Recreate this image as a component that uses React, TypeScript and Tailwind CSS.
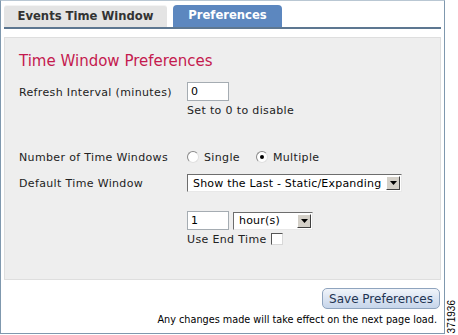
const font = { fontFamily: '"DejaVu Sans", Verdana, sans-serif' };

function Radio({ checked }: { checked?: boolean }) {
  return (
    <span className="relative inline-block w-[12px] h-[12px] rounded-full bg-white border border-t-[#8a8a8a] border-l-[#8a8a8a] border-b-[#e0e0e0] border-r-[#e0e0e0]">
      {checked && (
        <span className="absolute left-[3px] top-[3px] w-[4px] h-[4px] rounded-full bg-black" />
      )}
    </span>
  );
}

function SelectBox({ value, width }: { value: string; width: string }) {
  return (
    <div
      className={`${width} h-[18px] flex items-center bg-white border border-t-[#6d6d6d] border-l-[#6d6d6d] border-b-[#e8e8e8] border-r-[#e8e8e8] pl-[5px] pr-[1px]`}
    >
      <span className="flex-1 text-[11px] tracking-[0.2px] text-black leading-none whitespace-nowrap overflow-hidden">{value}</span>
      <span className="w-[14px] h-[14px] flex items-center justify-center bg-[#d4d0c8] border border-t-white border-l-white border-b-[#404040] border-r-[#404040]">
        <svg width="7" height="4" viewBox="0 0 7 4">
          <path d="M0 0h7L3.5 4z" fill="#000" />
        </svg>
      </span>
    </div>
  );
}

function TextInput({ value }: { value: string }) {
  return (
    <div className="w-[42px] h-[19px] flex items-center bg-white border border-[#a5acb2] pl-[3px] text-[11px] text-black leading-none">
      {value}
    </div>
  );
}

export default function App() {
  return (
    <div className="w-[458px] h-[335px] bg-white flex text-[#333]" style={font}>
      <div className="w-[445px] h-[334px] border border-[#7f98ae] border-t-[#b9c7d3] flex flex-col pl-[3px] pr-[3px]">
        {/* Tabs */}
        <div className="mt-[4px] flex items-end gap-[6px] h-[22px]">
          <div className="w-[163px] h-[22px] bg-[#e4e4e4] border-t border-[#f4f4f4] rounded-t-[3px] flex items-center justify-center text-[11.6px] font-bold text-[#333]">
            Events Time Window
          </div>
          <div className="w-[109px] h-[22px] bg-[#5c87bf] rounded-t-[4px] flex items-center justify-center text-[11.6px] font-bold text-white">
            Preferences
          </div>
        </div>
        <div className="h-[2px] bg-[#5d7791]" />

        {/* Panel */}
        <div className="mt-[8px] h-[243px] bg-[#eeeeee] border border-[#dedede] pl-[14px] pt-[13px] text-[11px] tracking-[0.35px] text-[#222]">
          <div className="text-[15px] tracking-normal text-[#c41a4e] leading-[20px]">Time Window Preferences</div>

          <div className="mt-[11px] flex">
            <div className="w-[168px] leading-none pt-[5px]">Refresh Interval (minutes)</div>
            <div className="flex flex-col">
              <TextInput value="0" />
              <div className="mt-[4px] leading-none">Set to 0 to disable</div>
            </div>
          </div>

          <div className="mt-[34px] flex items-center h-[14px]">
            <div className="w-[168px] leading-none">Number of Time Windows</div>
            <div className="flex items-center gap-[5px] leading-none">
              <Radio />
              <span>Single</span>
              <span className="w-[6px]" />
              <Radio checked />
              <span>Multiple</span>
            </div>
          </div>

          <div className="mt-[10px] flex items-center">
            <div className="w-[168px] leading-none">Default Time Window</div>
            <SelectBox value="Show the Last - Static/Expanding" width="w-[215px]" />
          </div>

          <div className="mt-[19px] ml-[168px] flex items-center gap-[4px]">
            <TextInput value="1" />
            <SelectBox value="hour(s)" width="w-[80px]" />
          </div>
          <div className="mt-[3px] ml-[168px] flex items-center gap-[4px] leading-none">
            <span>Use End Time</span>
            <span className="w-[12px] h-[12px] bg-white border border-t-[#555] border-l-[#555] border-b-[#d8d8d8] border-r-[#d8d8d8]" />
          </div>
        </div>

        {/* Footer */}
        <div className="flex flex-col items-end pr-[1px]">
          <button className="mt-[8px] w-[118px] h-[21px] rounded-[5px] border border-[#8fa4be] bg-gradient-to-b from-[#f0f4fa] to-[#c6d5ea] text-[12px] text-[#1f3452] leading-none">
            Save Preferences
          </button>
          <div className="mt-[6px] text-[9.7px] leading-none text-black whitespace-nowrap pr-[3px]">
            Any changes made will take effect on the next page load.
          </div>
        </div>
      </div>

      <div className="flex-1 flex items-end justify-center pb-[2px]">
        <span
          className="text-[10px] text-black leading-none whitespace-nowrap [writing-mode:vertical-rl] rotate-180"
          style={{ fontFamily: '"Liberation Sans", Arial, sans-serif' }}
        >
          371936
        </span>
      </div>
    </div>
  );
}
